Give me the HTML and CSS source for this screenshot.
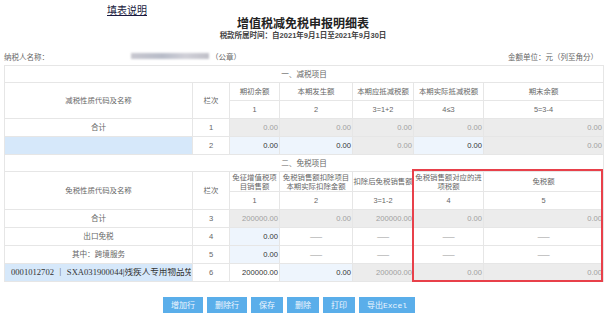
FILE: index.html
```html
<!DOCTYPE html>
<html lang="zh-CN">
<head>
    <meta charset="UTF-8">
    <title>增值税减免税申报明细表</title>
    <link rel="stylesheet" href="styles.css">
</head>
<body>
    <div class="page">
        <div class="help-row"><a class="help-link" href="#">填表说明</a></div>
        <h1 class="title">增值税减免税申报明细表</h1>
        <div class="period">税款所属时间：自2021年9月1日至2021年9月30日</div>

        <div class="info-row">
            <div class="taxpayer">
                <span class="label">纳税人名称：</span>
                <span class="blurred"></span>
                <span class="seal">（公章）</span>
            </div>
            <div class="unit">金额单位：元（列至角分）</div>
        </div>

        <div class="table-wrap">
            <table class="report">
                <colgroup>
                    <col class="c-name">
                    <col class="c-no">
                    <col class="c-1">
                    <col class="c-2">
                    <col class="c-3">
                    <col class="c-4">
                    <col class="c-5">
                </colgroup>
                <!-- 一、减税项目 -->
                <tr class="section">
                    <td colspan="7">一、减税项目</td>
                </tr>
                <tr class="head">
                    <td rowspan="2">减税性质代码及名称</td>
                    <td rowspan="2">栏次</td>
                    <td>期初余额</td>
                    <td>本期发生额</td>
                    <td>本期应抵减税额</td>
                    <td>本期实际抵减税额</td>
                    <td>期末余额</td>
                </tr>
                <tr class="head idx">
                    <td>1</td>
                    <td>2</td>
                    <td>3=1+2</td>
                    <td>4≤3</td>
                    <td>5=3-4</td>
                </tr>
                <tr>
                    <td class="name">合计</td>
                    <td class="no">1</td>
                    <td class="num ro">0.00</td>
                    <td class="num ro">0.00</td>
                    <td class="num ro">0.00</td>
                    <td class="num ro">0.00</td>
                    <td class="num ro">0.00</td>
                </tr>
                <tr>
                    <td class="name picked"></td>
                    <td class="no">2</td>
                    <td class="num edit">0.00</td>
                    <td class="num edit">0.00</td>
                    <td class="num ro">0.00</td>
                    <td class="num edit">0.00</td>
                    <td class="num ro">0.00</td>
                </tr>

                <!-- 二、免税项目 -->
                <tr class="section">
                    <td colspan="7">二、免税项目</td>
                </tr>
                <tr class="head tall">
                    <td rowspan="2">免税性质代码及名称</td>
                    <td rowspan="2">栏次</td>
                    <td>免征增值税项目销售额</td>
                    <td>免税销售额扣除项目本期实际扣除金额</td>
                    <td>扣除后免税销售额</td>
                    <td>免税销售额对应的进项税额</td>
                    <td>免税额</td>
                </tr>
                <tr class="head idx">
                    <td>1</td>
                    <td>2</td>
                    <td>3=1-2</td>
                    <td>4</td>
                    <td>5</td>
                </tr>
                <tr>
                    <td class="name">合计</td>
                    <td class="no">3</td>
                    <td class="num ro">200000.00</td>
                    <td class="num ro">0.00</td>
                    <td class="num ro">200000.00</td>
                    <td class="num ro">0.00</td>
                    <td class="num ro">0.00</td>
                </tr>
                <tr>
                    <td class="name">出口免税</td>
                    <td class="no">4</td>
                    <td class="num edit">0.00</td>
                    <td class="dash">——</td>
                    <td class="dash">——</td>
                    <td class="dash">——</td>
                    <td class="dash">——</td>
                </tr>
                <tr>
                    <td class="name">其中：跨境服务</td>
                    <td class="no">5</td>
                    <td class="num edit">0.00</td>
                    <td class="dash">——</td>
                    <td class="dash">——</td>
                    <td class="dash">——</td>
                    <td class="dash">——</td>
                </tr>
                <tr>
                    <td class="name picked code"><div class="clip">0001012702 ｜ SXA031900044|残疾人专用物品免征增值税</div></td>
                    <td class="no">6</td>
                    <td class="num">200000.00</td>
                    <td class="num edit">0.00</td>
                    <td class="num ro">200000.00</td>
                    <td class="num ro">0.00</td>
                    <td class="num ro">0.00</td>
                </tr>
            </table>
            <div class="mark"></div>
        </div>

        <div class="actions">
            <button>增加行</button>
            <button>删除行</button>
            <button>保存</button>
            <button>删除</button>
            <button>打印</button>
            <button>导出<span class="latin">Excel</span></button>
        </div>
    </div>
</body>
</html>
```

FILE: styles.css
```css
body {
    margin: 0;
    padding: 0;
    background: #fff;
    font-family: "Liberation Sans", "Noto Sans CJK SC", sans-serif;
    color: #555;
}
.page {
    padding: 0 3px 0 4px;
}
.help-row {
    height: 17px;
    padding-left: 103px;
}
.help-link {
    display: inline-block;
    margin-top: 2px;
    font-size: 10px;
    line-height: 12px;
    color: #1a1a40;
    text-decoration: underline;
}
.title {
    margin: 0;
    text-align: center;
    font-size: 12px;
    line-height: 14px;
    font-weight: bold;
    color: #222;
}
.period {
    text-align: center;
    font-size: 7.5px;
    line-height: 10px;
    font-weight: bold;
    color: #444;
}
.info-row {
    display: flex;
    justify-content: space-between;
    align-items: center;
    margin-top: 9px;
    height: 12px;
    font-size: 7.5px;
    color: #666;
}
.taxpayer {
    display: flex;
    align-items: center;
}
.blurred {
    display: inline-block;
    width: 78px;
    height: 6px;
    margin-left: 82px;
    background: linear-gradient(90deg, #c8c8d0, #b8bcc8 40%, #d0d0d8 70%, #c0c0c8);
    filter: blur(1.2px);
}
.seal {
    margin-left: 2px;
}
.unit {
    padding-right: 4px;
}
.table-wrap {
    position: relative;
    margin-top: 3px;
}
.report {
    border-collapse: collapse;
    table-layout: fixed;
    width: 599px;
    font-size: 7.6px;
}
.c-name { width: 188px; }
.c-no { width: 37px; }
.c-1 { width: 50px; }
.c-2 { width: 73px; }
.c-3 { width: 61px; }
.c-4 { width: 70px; }
.c-5 { width: 120px; }
.report td {
    border: 1px solid #e6e6e6;
    height: 17px;
    padding: 0 1px;
    line-height: 9px;
    text-align: center;
    color: #666;
    overflow: hidden;
}
.report tr.head td {
    padding: 0;
    font-size: 7.4px;
}
.report tr.section td {
    height: 16px;
    text-align: center;
    color: #666;
}
.report tr.tall td {
    height: 19px;
}
.report td.num {
    text-align: right;
    color: #333;
}
.report td.ro {
    background: #ececec;
    color: #a0a0a0;
}
.report td.edit {
    background: #eef5fd;
}
.report td.picked {
    background: #d6e8fa;
}
.report td.dash {
    font-family: "Noto Sans CJK SC", sans-serif;
    color: #999;
}
.report td.code {
    text-align: left;
    padding-left: 6px;
}
.clip {
    white-space: nowrap;
    overflow: hidden;
    font-family: "Liberation Serif", "Noto Sans CJK SC", serif;
    font-size: 8.6px;
    color: #333;
}
.mark {
    position: absolute;
    left: 408px;
    top: 104px;
    width: 187px;
    height: 109px;
    border: 2px solid #e8404a;
}
.actions {
    display: flex;
    gap: 4px;
    margin-top: 15px;
    padding-left: 159px;
}
.actions button {
    height: 16px;
    padding: 0 8px;
    border: none;
    background: #5aaeea;
    color: #eef6fe;
    font-family: "Noto Sans CJK SC", sans-serif;
    font-size: 8px;
    line-height: 16px;
}
.latin {
    font-family: "Liberation Mono", monospace;
    font-size: 8px;
}
```
